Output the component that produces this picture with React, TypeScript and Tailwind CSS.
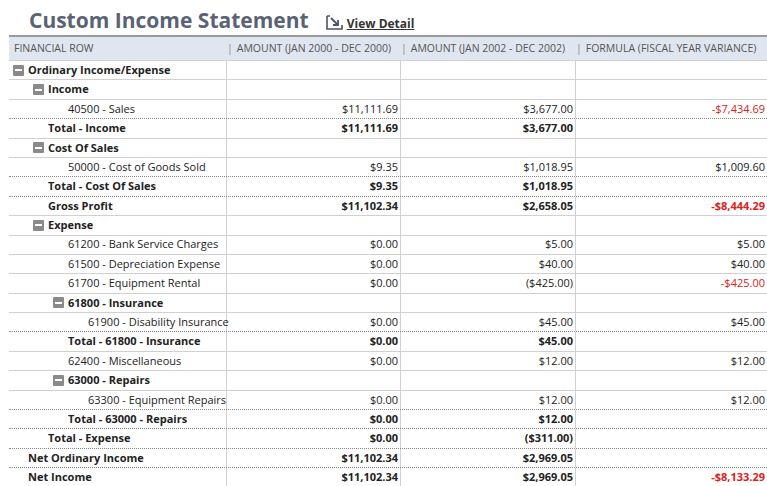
import React from "react";

type Row = { label: string; lvl: number; kind: "group" | "leaf" | "total"; a?: string; b?: string; c?: string; neg?: boolean };

const rows: Row[] = [
  { label: "Ordinary Income/Expense", lvl: 0, kind: "group" },
  { label: "Income", lvl: 1, kind: "group" },
  { label: "40500 - Sales", lvl: 2, kind: "leaf", a: "$11,111.69", b: "$3,677.00", c: "-$7,434.69", neg: true },
  { label: "Total - Income", lvl: 1, kind: "total", a: "$11,111.69", b: "$3,677.00" },
  { label: "Cost Of Sales", lvl: 1, kind: "group" },
  { label: "50000 - Cost of Goods Sold", lvl: 2, kind: "leaf", a: "$9.35", b: "$1,018.95", c: "$1,009.60" },
  { label: "Total - Cost Of Sales", lvl: 1, kind: "total", a: "$9.35", b: "$1,018.95" },
  { label: "Gross Profit", lvl: 1, kind: "total", a: "$11,102.34", b: "$2,658.05", c: "-$8,444.29", neg: true },
  { label: "Expense", lvl: 1, kind: "group" },
  { label: "61200 - Bank Service Charges", lvl: 2, kind: "leaf", a: "$0.00", b: "$5.00", c: "$5.00" },
  { label: "61500 - Depreciation Expense", lvl: 2, kind: "leaf", a: "$0.00", b: "$40.00", c: "$40.00" },
  { label: "61700 - Equipment Rental", lvl: 2, kind: "leaf", a: "$0.00", b: "($425.00)", c: "-$425.00", neg: true },
  { label: "61800 - Insurance", lvl: 2, kind: "group" },
  { label: "61900 - Disability Insurance", lvl: 3, kind: "leaf", a: "$0.00", b: "$45.00", c: "$45.00" },
  { label: "Total - 61800 - Insurance", lvl: 2, kind: "total", a: "$0.00", b: "$45.00" },
  { label: "62400 - Miscellaneous", lvl: 2, kind: "leaf", a: "$0.00", b: "$12.00", c: "$12.00" },
  { label: "63000 - Repairs", lvl: 2, kind: "group" },
  { label: "63300 - Equipment Repairs", lvl: 3, kind: "leaf", a: "$0.00", b: "$12.00", c: "$12.00" },
  { label: "Total - 63000 - Repairs", lvl: 2, kind: "total", a: "$0.00", b: "$12.00" },
  { label: "Total - Expense", lvl: 1, kind: "total", a: "$0.00", b: "($311.00)" },
  { label: "Net Ordinary Income", lvl: 0, kind: "total", a: "$11,102.34", b: "$2,969.05" },
  { label: "Net Income", lvl: 0, kind: "total", a: "$11,102.34", b: "$2,969.05", c: "-$8,133.29", neg: true },
];

const pad = ["pl-[4px]", "pl-[24px]", "pl-[44px]", "pl-[64px]"];
const textPad = ["pl-[19px]", "pl-[39px]", "pl-[59px]", "pl-[79px]"];

function Minus() {
  return (
    <span className="w-[11px] h-[11px] bg-[#8a8a8a] rounded-[1px] flex items-center justify-center mr-[4px] shrink-0">
      <span className="w-[7px] h-[2px] bg-white" />
    </span>
  );
}

export default function App() {
  return (
    <div className="w-[767px] h-[486px] bg-white overflow-hidden text-[11px] text-[#222]" style={{ fontFamily: '"Open Sans", sans-serif' }}>
      <div className="flex items-end h-[35px] pl-[29px] pb-[4px]">
        <span className="text-[21px] font-bold text-[#5a6373] leading-none">Custom Income Statement</span>
        <span className="ml-[17px] flex items-end mb-[1px]">
          <svg width="17" height="15" viewBox="0 0 17 15" className="mr-[4px]">
            <path d="M1 1h3M1 1v13h15v-4" fill="none" stroke="#4a5568" strokeWidth="1.6" />
            <path d="M5 3l7 7M12 5v5H7" fill="none" stroke="#4a5568" strokeWidth="1.8" />
          </svg>
          <span className="text-[12px] font-bold text-[#333] underline leading-none">View Detail</span>
        </span>
      </div>
      <div className="ml-[9px] border-t-2 border-[#999]">
        <div className="grid grid-cols-[218px_174px_175px_1fr] h-[23px] bg-[#e0e6ef] text-[#555] text-[10.5px] items-center">
          <div className="pl-[5px]">FINANCIAL ROW</div>
          <div className="flex items-center"><span className="text-[#888] mr-[4px]">|</span>AMOUNT (JAN 2000 - DEC 2000)</div>
          <div className="flex items-center"><span className="text-[#888] mr-[4px]">|</span>AMOUNT (JAN 2002 - DEC 2002)</div>
          <div className="flex items-center"><span className="text-[#888] mr-[4px]">|</span>FORMULA (FISCAL YEAR VARIANCE)</div>
        </div>
        {rows.map((r, i) => {
          const bold = r.kind !== "leaf";
          const top = r.kind === "total" ? "border-t border-dotted border-[#888]" : "border-t border-[#d0d0d0]";
          return (
            <div key={i} className={`grid grid-cols-[218px_174px_175px_1fr] h-[19.4px] box-border ${top} ${bold ? "font-bold" : ""}`}>
              <div className={`flex items-center border-r border-[#d0d0d0] ${r.kind === "group" ? pad[r.lvl] : textPad[r.lvl]}`}>
                {r.kind === "group" && <Minus />}
                <span className="whitespace-nowrap">{r.label}</span>
              </div>
              <div className="flex items-center justify-end pr-[2px] border-r border-[#d0d0d0]">{r.a}</div>
              <div className="flex items-center justify-end pr-[2px] border-r border-[#d0d0d0]">{r.b}</div>
              <div className={`flex items-center justify-end pr-[2px] ${r.neg ? "text-[#e02020]" : ""}`}>{r.c}</div>
            </div>
          );
        })}
      </div>
    </div>
  );
}
